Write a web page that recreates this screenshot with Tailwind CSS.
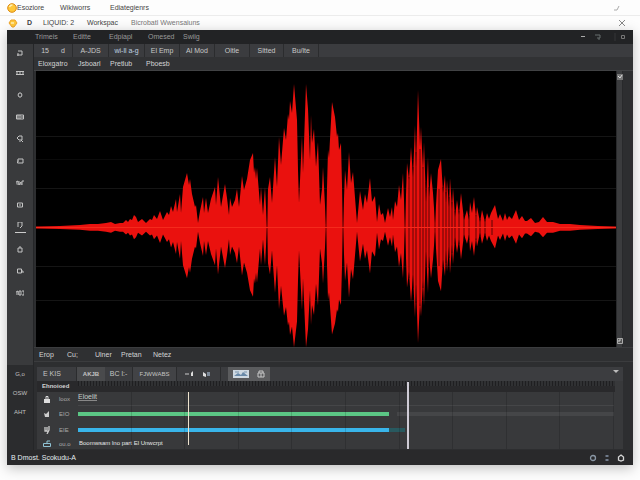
<!DOCTYPE html>
<html lang="en">
<head>
  <meta charset="UTF-8">
  <meta name="viewport" content="width=device-width, initial-scale=1.0">
  <title>Audio Editor</title>
  <script src="https://cdn.jsdelivr.net/npm/@tailwindcss/browser@4"></script>
</head>
<body class="h-screen overflow-hidden flex flex-col bg-[#fdfdfd] font-['Liberation_Sans',sans-serif] text-[7px] leading-[10px] text-[#d4d4d4]">

  <!-- Window title bars -->
  <header class="shrink-0 text-[#444]">
    <div class="flex items-center h-4 pl-[7px] pr-4 border-b border-[#ececec]">
      <svg class="w-[10px] h-[10px]" viewBox="0 0 10 10"><circle cx="5" cy="5" r="4.3" fill="#ffc83a" stroke="#dd8a12"/><path d="M2.5 4a3 3 0 0 1 3-2" fill="none" stroke="#fff2b8" stroke-width="1.3"/></svg>
      <nav class="flex">
        <a href="#" class="w-[43px]">Esoziore</a>
        <a href="#" class="w-[50px]">Wikiworrs</a>
        <a href="#">Ediategienrs</a>
      </nav>
      <svg class="ml-auto w-2 h-2 mr-1" viewBox="0 0 8 8"><path d="M2 6h3l2-4" fill="none" stroke="#aaa"/></svg>
    </div>
    <div class="flex items-center h-[14px] pl-2 pr-[14px]">
      <svg class="w-[10px] h-[10px]" viewBox="0 0 10 10"><path d="M1 5 3 2h4l2 3-3 4H4z" fill="#ffc83a" stroke="#eda32b"/><path d="M3 5h3" stroke="#fff3bf" stroke-width="1.4"/></svg>
      <nav class="flex pl-[9px]">
        <a href="#" class="w-4 font-bold">D</a>
        <a href="#" class="w-11">LIQUID: 2</a>
        <a href="#" class="w-11">Workspac</a>
        <a href="#" class="text-[#777]">Bicrobatl Wwensaiuns</a>
      </nav>
      <button aria-label="Close" class="ml-auto"><svg class="w-2 h-2" viewBox="0 0 8 8"><path d="m1 1 6 6M7 1 1 7" stroke="#888"/></svg></button>
    </div>
  </header>

  <!-- Editor window -->
  <div class="flex-1 min-h-0 flex flex-col mx-[7px] mb-[15px] bg-[#2d2e30] shadow-[0_3px_12px_#00000040]">
    <nav class="shrink-0 flex items-center h-[14px] pl-7 pr-1 bg-[#222325] text-[#999]">
      <a href="#" class="w-[38px]">Trimeis</a>
      <a href="#" class="w-9">Editte</a>
      <a href="#" class="w-[39px]">Edpiapl</a>
      <a href="#" class="w-[35px]">Omesed</a>
      <a href="#">Swiig</a>
      <svg class="ml-auto w-[52px] h-2" viewBox="0 0 52 8" fill="none"><path d="M4 3.5h4" stroke="#aaa"/><path d="M18 2h5v3h-3M22 5v2" stroke="#666e6e"/><path d="M38 0v8" stroke="#343638"/><path d="M44.500 2.500h3v3h-3z" stroke="#777"/></svg>
    </nav>

    <div class="flex-1 min-h-0 flex">
      <!-- Tool sidebar -->
      <aside class="w-[27px] shrink-0 flex flex-col bg-[#2b2c2e] border-r border-[#252628]">
        <div id="tools" class="flex-1 flex flex-col items-center bg-[#393a3c]"></div>
        <div class="h-[85px] shrink-0 flex flex-col items-center pt-1 gap-[9px] text-[6px] text-[#c0c0c0]">
          <button>G,o</button>
          <button>OSW</button>
          <button>AHT</button>
        </div>
      </aside>

      <main class="flex-1 min-w-0 flex flex-col">
        <!-- Toolbar -->
        <div class="shrink-0 flex items-stretch h-[13px] bg-[#3b3c3f] divide-x divide-[#2b2c2e] text-[#c8c8c8]">
          <button class="w-[39px] flex justify-center items-center gap-3"><span>15</span><span>d</span></button>
          <button class="w-9">A-JDS</button>
          <button class="w-9 text-[#bfd0e0]">wi-ll a-g</button>
          <button class="w-[35px]">El Emp</button>
          <button class="w-[35px]">Al Mod</button>
          <button class="w-[35px]">Oltle</button>
          <button class="w-[34px]">Sltted</button>
          <button class="w-[35px]">Bu/lte</button>
          <span class="flex-1"></span>
        </div>
        <div class="shrink-0 flex items-center h-[14px] pl-1 bg-[#313234] border-b border-[#414244]">
          <button class="w-10 text-left">Eloxgatro</button>
          <button class="w-8 text-left">Jsboarl</button>
          <button class="w-9 text-left">Pretlub</button>
          <button>Pboesb</button>
        </div>

        <!-- Waveform -->
        <div class="flex-1 min-h-0 flex pl-[2px] pr-[10px]">
          <svg id="wave" class="flex-1 min-w-0 h-full bg-black" viewBox="36 71 580 276" preserveAspectRatio="none">
            <path d="M36 136.500h580M36 188.500h580M36 266.500h580M36 300.500h580" stroke="#151515"/>
            <path d="M36 159.500h580" stroke="#0b0b0b"/>
            <polygon id="wave-shape" fill="#ea110e"/>
            <path id="wave-gaps" stroke="#160000" stroke-opacity=".75" stroke-width=".9"/>
            <path d="M36 227.500h580" stroke="#f52a1c"/>
          </svg>
          <div class="w-[7px] flex flex-col items-center justify-between py-[3px] bg-[#3b3c3e] border-x border-[#28292b]">
            <svg class="w-[6px] h-[6px]" viewBox="0 0 6 6"><path d="M0 0h6v6H0z" fill="#777"/><path d="m1 2 2 2 2-3" fill="none" stroke="#ddd"/></svg>
            <svg class="w-[6px] h-[6px]" viewBox="0 0 6 6"><path d="M.5.500h5v5h-5z" fill="#555" stroke="#aaa"/><path d="M2 4V2h2" fill="none" stroke="#ccc"/></svg>
          </div>
        </div>

        <div class="shrink-0 flex items-center h-[15px] pl-[5px] border-y border-[#3b3c3e] bg-[#2f3032]">
          <button class="w-7 text-left">Erop</button>
          <button class="w-7 text-left">Cu;</button>
          <button class="w-[26px] text-left">Ulner</button>
          <button class="w-8 text-left">Pretan</button>
          <button>Netez</button>
        </div>

        <!-- Timeline -->
        <section class="shrink-0 ml-[3px] mr-[10px] mt-[5px] mb-px bg-[#38393b]">
          <div class="flex items-stretch h-[14px] bg-[#3c3d40] text-[#c4c4c4]">
            <button class="w-10 pl-[6px] text-left border-r border-[#2b2c2e]">E KIS</button>
            <button class="w-7 bg-[#494a4c] text-[6px] font-bold">AKJB</button>
            <button class="w-7 border-r border-[#2b2c2e]">BC l:-</button>
            <button class="w-[43px] bg-[#424346] text-[6px]">FJWWABS</button>
            <button aria-label="Trim and mute" class="w-[45px] flex items-center justify-center border-x border-[#2b2c2e]">
              <svg class="w-7 h-2" viewBox="0 0 28 8"><path d="M0 4h4" stroke="#ccc"/><path d="M6 6V3l2-2v5z" fill="#ddd"/><path d="M18 2l3 2v3l-3-1z" fill="#ddd"/><path d="M22 2h3v4h-3z" fill="#7d8998"/></svg>
            </button>
            <button aria-label="View mode" class="w-[42px] ml-[7px] flex items-center justify-center gap-2 bg-[#5b5c5e]">
              <svg class="w-4 h-2" viewBox="0 0 16 8"><path d="M0 0h16v8H0z" fill="#cfd9e2"/><path d="M1 6l4-3 3 2 2-3 5 4z" fill="#6989a8"/><path d="M2 2h4M11 2h3" stroke="#7894ad"/></svg>
              <svg class="w-2 h-2" viewBox="0 0 8 8"><path d="M1 3h6v4H1zM2 3V1h4v2M4 3v4" fill="none" stroke="#c8c8c8"/></svg>
            </button>
            <svg class="ml-auto mr-1 mt-[2px] w-[6px] h-[4px]" viewBox="0 0 6 4"><path d="M0 1h6L3 4z" fill="#bbb"/></svg>
          </div>

          <div class="relative">
            <div class="flex h-[11px] mr-2 bg-[#29292b]">
              <div class="w-[41px] pl-[5px] text-[6px] font-bold">Ehnoioed</div>
              <div class="flex-1 h-[5px] bg-[repeating-linear-gradient(90deg,#1f1f21_0px,#1f1f21_1px,#303133_1px,#303133_3px)]"></div>
            </div>
            <div class="grid grid-cols-[41px_1fr] pr-[9px] text-[6px] text-[#aaa]">
              <div class="flex items-center h-[14px] pl-[6px] gap-2">
                <svg class="w-2 h-2" viewBox="0 0 8 8"><path d="M1 4h6v4H1z" fill="#ddd"/><path d="M3 4V1.500h2V4" fill="none" stroke="#ddd"/></svg>loox
              </div>
              <div class="h-[14px] border-b border-[#454648] text-[7px] text-[#c4cbc8]"><span class="border-b border-[#888]">Eloelit</span></div>

              <div class="flex items-center h-4 pl-[6px] gap-2">
                <svg class="w-2 h-2" viewBox="0 0 8 8"><path d="M1 3l2 1 3-3v6H2z" fill="#ccc"/></svg>EIO
              </div>
              <div class="flex items-center h-4">
                <div class="w-[58%] h-1 bg-[#5bc685]"></div>
                <div class="flex-1 h-1 ml-2 bg-[#454648]"></div>
              </div>

              <div class="flex items-center h-4 pl-[6px] gap-2">
                <svg class="w-2 h-2" viewBox="0 0 8 8"><path d="M2 1v4h2V1M6 0v4L4 8" fill="none" stroke="#ccc" stroke-width="1.300"/></svg>EIE
              </div>
              <div class="flex items-center h-4">
                <div class="w-[58%] h-1 bg-[#39b5ea]"></div>
                <div class="w-[3%] h-1 bg-[#28595f]"></div>
              </div>

              <div class="flex items-center h-[11px] pl-[6px] gap-2">
                <svg class="w-2 h-2" viewBox="0 0 8 8"><path d="M.5 3.500h7v3h-7zM4 3V1h3" fill="none" stroke="#8fc3d4"/></svg>ou.o
              </div>
              <div class="h-[11px] text-[#e6e6e6] pl-[1px]">Boomwsam lno part El Unwcrpt</div>
            </div>

            <!-- Grid lines and playheads lie over the lanes -->
            <div class="absolute top-0 bottom-0 left-[41px] right-[9px] pointer-events-none">
              <div class="h-full pt-[11px] grid grid-cols-10">
                <i class="border-r border-black/15"></i><i class="border-r border-black/15"></i><i class="border-r border-black/15"></i><i class="border-r border-black/15"></i><i class="border-r border-black/15"></i><i class="border-r border-black/15"></i><i class="border-r border-black/15"></i><i class="border-r border-black/15"></i><i class="border-r border-black/15"></i><i class="border-r border-black/15"></i>
              </div>
              <div class="absolute top-[11px] bottom-1 left-[20.5%] w-px bg-[#eee3ce]"></div>
              <div class="absolute top-px bottom-0 left-[61.3%] w-[2px] bg-[#cfccd6]"></div>
            </div>
          </div>
        </section>
      </main>
    </div>

    <!-- Status bar -->
    <footer class="shrink-0 flex items-center h-[15px] px-1 bg-[#29292b]">
      <span class="text-[#e4ecf0]">B Dmost. Scokudu-A</span>
      <div class="ml-auto flex items-center gap-[6px] pr-1">
        <svg class="w-2 h-2" viewBox="0 0 8 8"><circle cx="4" cy="4" r="2.500" fill="none" stroke="#8a97a5" stroke-width="1.300"/></svg>
        <svg class="w-2 h-2" viewBox="0 0 8 8"><path d="M2.500 2h3M2.500 6h3" stroke="#8795aa" stroke-width="1.300"/></svg>
        <svg class="w-2 h-2" viewBox="0 0 8 8"><path d="M4 1 6.500 3v3L4 7 1.500 6V3z" fill="none" stroke="#d5d5d5" stroke-width="1.300"/></svg>
      </div>
    </footer>
  </div>

  <script>
    // Sidebar tool glyphs, 8x8 each
    const tools = [
      ['Select', 'M2 2h4v4H1M2 4v3'],
      ['Trim', 'M0 2.500h8M0 5.500h8M1 2v4M4 2v4M7 2v4'],
      ['Loop', 'M3 2h2l1 2-1 2H3L2 4z'],
      ['Mixer', 'M.5 2h7v4h-7zM2 2v4M4 2v4M5 4h2'],
      ['Magnify', 'M1 3l2-2h3v4H3zM5 5l2 2M4 6v1'],
      ['Region', 'M2 2h5v4H1.500zM2 4h1'],
      ['Marker', 'M0 5.500V3l2-1v4M3 2v4l2-3v3M6 6V2h2'],
      ['Stamp', 'M1.500 2h5v4h-5zM3 4h2'],
      ['Cursor', 'M2 5V0h4v4L4 6'],
      ['Pan', 'M2 3h4v4H2zM4 1v2'],
      ['Group', 'M1.500 2h4v4h-4zM5 4h2v2'],
      ['Add', 'M0 6V3l2-1v4M3 2v4h2V2zM6 2h2v4H6']
    ];
    document.getElementById('tools').innerHTML = tools.map(([name, d]) => `
      <button aria-label="${name}" class="w-full h-[22px] first:h-[18px] flex flex-col items-center justify-center">
        <svg class="w-2 h-2" viewBox="0 0 8 8"><path d="${d}" fill="none" stroke="#c4c4c4"/></svg>
        ${name === 'Cursor' ? '<span class="w-[11px] h-px mt-[2px] bg-[#ccc]"></span>' : ''}
      </button>`).join('');

    // Waveform envelope: x, height above the centre line
    const env = [
      36,.5, 60,1, 80,2, 90,3, 98,3, 106,4, 111,5, 115,3, 120,4, 123,4, 126,7, 128,5, 130,8, 132,7, 134,12, 136,10, 138,5, 142,8, 146,4,
      150,8, 152,7, 154,12, 157,8, 160,16, 163,7, 165,11, 167,15, 169,12, 171,21, 173,15, 176,28, 177,15, 180,33, 181,14, 183,40,
      187,54, 189,42, 190,48, 192,33, 195,20, 196,22, 198,4, 200,16, 203,30, 204,14, 206,29, 208,14, 211,28, 215,40, 216,22, 218,50,
      221,20, 225,43, 227,29, 229,12, 230,29, 232,20, 235,27, 237,38, 239,20, 242,51, 244,37, 247,48, 250,67, 253,74, 254,54, 255,60,
      256,48, 257,59, 260,22, 261,40, 263,12, 265,40, 267,0, 268,38, 270,50, 272,24, 275,70, 277,40, 279,90, 281,62, 284,99, 286,87,
      288,113, 289,107, 290,126, 292,114, 294,143, 297,107, 298,57, 299,24, 302,91, 303,54, 306,143, 308,118, 310,67, 311,112, 312,84,
      314,98, 316,60, 318,85, 320,22, 322,38, 323,60, 326,2, 328,77, 329,69, 332,125, 335,110, 337,90, 338,94, 339,77, 341,84, 343,0,
      345,57, 347,37, 349,75, 351,44, 353,55, 357,4, 360,36, 363,17, 365,33, 367,24, 370,49, 372,25, 375,31, 377,5, 379,23, 381,12,
      383,14, 385,4, 388,19, 390,10, 392,20, 393,7, 395,26, 397,20, 399,42, 401,27, 403,54, 405,0, 407,64, 409,47, 411,80, 413,50,
      415,102, 416,60, 418,137, 420,80, 421,100, 423,57, 424,85, 426,25, 428,70, 429,30, 431,54, 433,34, 435,4, 438,57, 441,68,
      443,34, 445,52, 446,24, 447,47, 449,20, 450,49, 452,18, 453,39, 455,10, 457,27, 459,12, 461,34, 464,7, 467,17, 469,7, 470,25,
      472,14, 474,30, 476,10, 477,20, 480,5, 482,17, 485,5, 487,14, 489,8, 491,14, 495,22, 498,8, 500,13, 503,6, 505,14, 507,7,
      509,11, 512,8, 516,17, 519,7, 522,11, 525,6, 527,6, 531,9, 535,4, 539,5, 543,10, 547,5, 553,5, 560,3, 570,3, 580,2, 598,1, 616,.5
    ];
    const upper = [], lower = [];
    for (let i = 0; i < env.length; i += 2) {
      const x = env[i], h = env[i + 1];
      const drop = h < 80 ? h * 0.93 : 74 + (h - 80) * 0.72;
      upper.push(`${x},${227 - h}`);
      lower.unshift(`${x},${228 + drop}`);
    }
    document.getElementById('wave-shape').setAttribute('points', upper.concat(lower).join(' '));

    // Thin gaps between the denser cycles
    const gaps = [[267, 30], [326, 50], [343, 60], [405, 40], [409, 50], [413, 60], [416, 75], [420, 78], [423, 60], [426, 45], [429, 40],
      [435, 25], [439, 38], [443, 40], [446, 35], [449, 30], [452, 25], [455, 16], [459, 16], [464, 12], [469, 12], [476, 12], [480, 8], [485, 7], [492, 7]];
    document.getElementById('wave-gaps').setAttribute('d', gaps.map(([x, h]) => `M${x} ${227 - h}V${228 + h}`).join(''));
  </script>
</body>
</html>
